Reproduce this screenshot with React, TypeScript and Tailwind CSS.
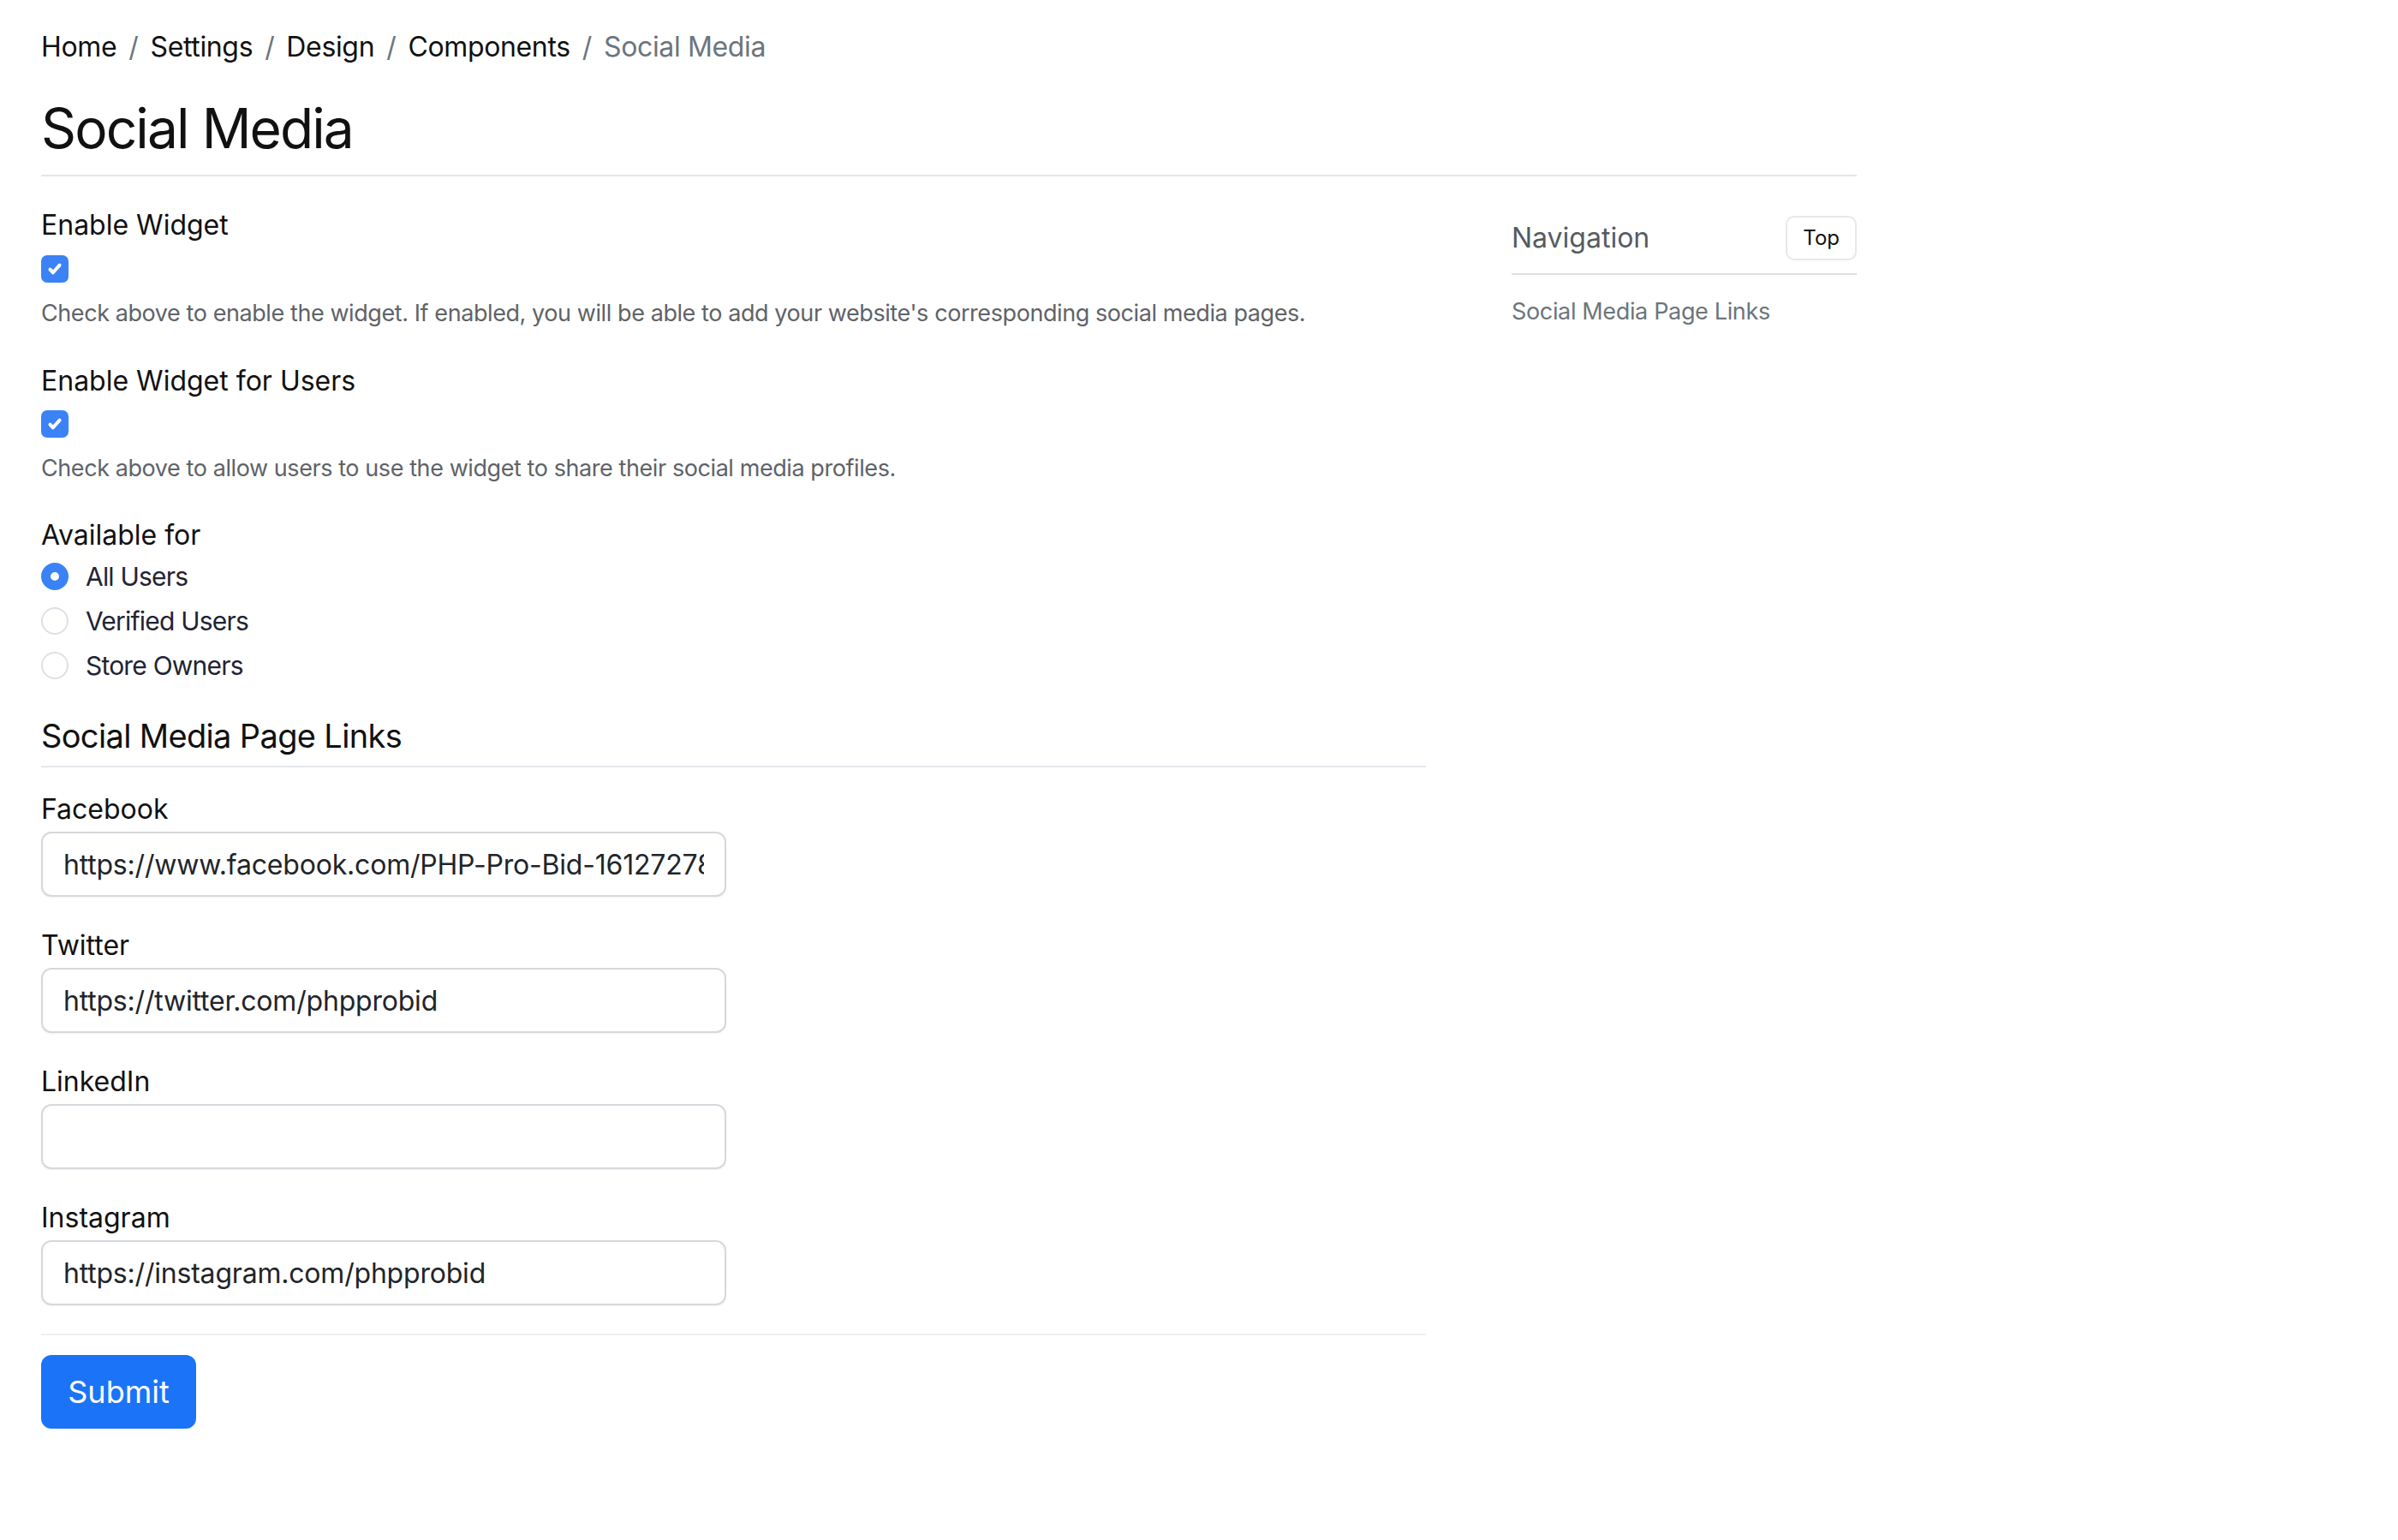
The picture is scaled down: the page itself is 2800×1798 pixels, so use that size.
import React from "react";

const crumbs = ["Home", "Settings", "Design", "Components"];

const links = [
  { label: "Facebook", value: "https://www.facebook.com/PHP-Pro-Bid-161272781836710" },
  { label: "Twitter", value: "https://twitter.com/phpprobid" },
  { label: "LinkedIn", value: "" },
  { label: "Instagram", value: "https://instagram.com/phpprobid" },
];

const Checkbox: React.FC = () => (
  <span className="flex h-[32px] w-[32px] items-center justify-center rounded-[7px] bg-[#3b82f6]">
    <svg viewBox="0 0 16 16" className="h-[26px] w-[26px]" fill="none">
      <path d="M4.6 8.4l2.1 2.2 4.7-5.3" stroke="white" strokeWidth="2.5" strokeLinecap="round" strokeLinejoin="round" />
    </svg>
  </span>
);

const Radio: React.FC<{ checked?: boolean }> = ({ checked }) =>
  checked ? (
    <span className="block h-[32px] w-[32px] rounded-full border-[11px] border-[#3b82f6] bg-white" />
  ) : (
    <span className="block h-[32px] w-[32px] rounded-full border-2 border-[#dde1e6] bg-white" />
  );

const App: React.FC = () => {
  return (
    <div className="min-h-screen bg-white px-[48px] text-[#111] [font-family:Inter,'Liberation_Sans',sans-serif]">
      <div className="w-[2120px]">
        {/* Breadcrumb */}
        <nav className="flex items-center pt-[31px] text-[32px] leading-[48px] tracking-[-0.35px]">
          {crumbs.map((c) => (
            <React.Fragment key={c}>
              <span className="text-[#111]">{c}</span>
              <span className="px-[14px] text-[#6c757d]">/</span>
            </React.Fragment>
          ))}
          <span className="text-[#6c757d]">Social Media</span>
        </nav>

        {/* Title */}
        <h1 className="mt-[29px] text-[64px] font-normal leading-[84px] tracking-[-1.9px]">Social Media</h1>
        <div className="mt-[12px] border-t-2 border-[#e5e5e5]" />

        <div className="flex gap-[100px]">
          {/* Main column */}
          <div className="w-[1617px] pt-[33px]">
            <div className="text-[32px] leading-[48px]">Enable Widget</div>
            <div className="mt-[11px]">
              <Checkbox />
            </div>
            <p className="mt-[15px] text-[27px] leading-[42px] tracking-[-0.42px] text-[#5f6368]">
              Check above to enable the widget. If enabled, you will be able to add your website's corresponding social media pages.
            </p>

            <div className="mt-[34px] text-[32px] leading-[48px]">Enable Widget for Users</div>
            <div className="mt-[10px]">
              <Checkbox />
            </div>
            <p className="mt-[15px] text-[27px] leading-[42px] tracking-[-0.42px] text-[#5f6368]">
              Check above to allow users to use the widget to share their social media profiles.
            </p>

            <div className="mt-[33px] text-[32px] leading-[48px]">Available for</div>
            <div className="flex flex-col gap-[4px]">
              {["All Users", "Verified Users", "Store Owners"].map((r, i) => (
                <label
                  key={r}
                  className="flex items-center gap-[20px] text-[30px] leading-[48px] tracking-[-0.8px] text-[#1f2433]"
                >
                  <Radio checked={i === 0} />
                  {r}
                </label>
              ))}
            </div>

            <h2 className="mt-[34px] text-[38px] font-normal leading-[48px] tracking-[-0.65px]">Social Media Page Links</h2>
            <div className="mt-[11px] border-t-2 border-[#e5e7eb]" />

            <div className="mt-[25px] flex flex-col gap-[33px]">
              {links.map((l) => (
                <div key={l.label}>
                  <div className="text-[32px] leading-[48px]">{l.label}</div>
                  <input
                    readOnly
                    defaultValue={l.value}
                    className="mt-[2px] block h-[76px] w-[800px] rounded-[12px] border-2 border-[#d5d8dc] bg-white px-[24px] text-[32px] tracking-[-0.2px] text-[#212529] shadow-[0_1px_2px_rgba(0,0,0,0.06)] outline-none"
                  />
                </div>
              ))}
            </div>

            <div className="mt-[33px] border-t-2 border-[#f0f0f0]" />
            <button className="mt-[23px] h-[86px] w-[181px] rounded-[12px] bg-[#1b74f7] text-[36px] text-white">
              Submit
            </button>
          </div>

          {/* Sidebar */}
          <aside className="w-[403px] pt-[46px]">
            <div className="flex h-[52px] items-center justify-between">
              <span className="text-[32px] text-[#555b61]">Navigation</span>
              <button className="h-[52px] rounded-[10px] border-2 border-[#e8e8e8] px-[18px] text-[24px] text-[#111]">
                Top
              </button>
            </div>
            <div className="mt-[15px] border-t-2 border-[#dedede]" />
            <div className="mt-[22px] text-[27px] leading-[42px] tracking-[-0.35px] text-[#6c757d]">
              Social Media Page Links
            </div>
          </aside>
        </div>
      </div>
    </div>
  );
};

export default App;
